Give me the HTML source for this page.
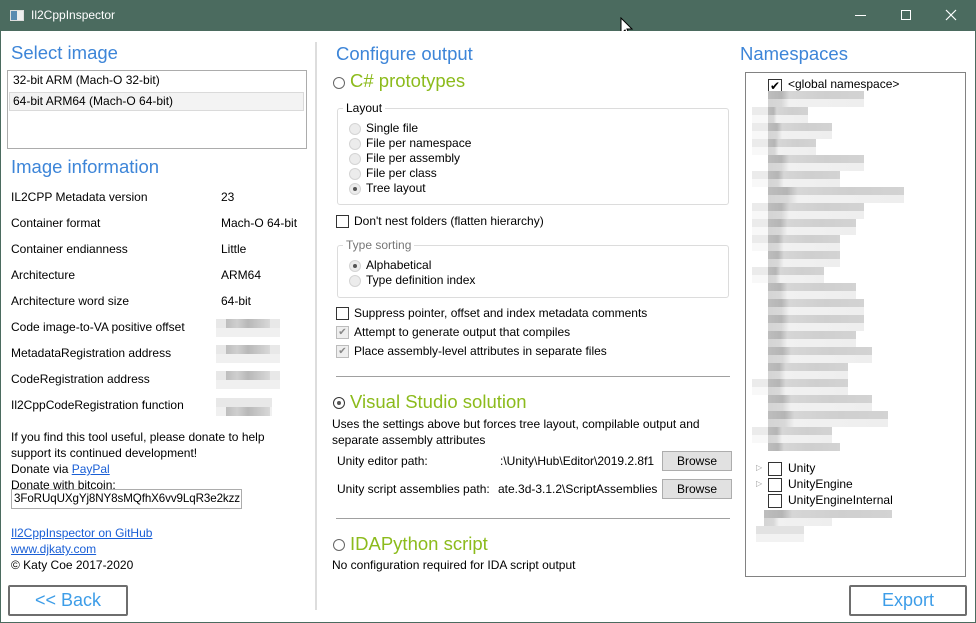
<!DOCTYPE html>
<html><head><meta charset="utf-8"><style>
*{margin:0;padding:0;box-sizing:border-box}
body{width:976px;height:623px;overflow:hidden;background:#4b6b5f;font-family:"Segoe UI","Liberation Sans",sans-serif;font-size:12px;color:#000;position:relative}
.win{position:absolute;left:1px;top:31px;width:974px;height:591px;background:#fff}
.in{position:absolute;left:0;top:1px;width:974px;height:590px}
.a{position:absolute;white-space:nowrap}
.h{font-size:18.5px;color:#3d85d8}
.g{font-size:18.5px;color:#8cbb1c}
.lnk{color:#1a5fd6;text-decoration:underline}
.rad{position:absolute;width:12px;height:12px;border-radius:50%;border:1px solid #d4d4d4;background:#ececec}
.rad.on::after{content:"";position:absolute;left:3px;top:3px;width:4px;height:4px;border-radius:50%;background:#555}
.cb{position:absolute;width:13px;height:13px;border:1px solid #333;background:#fff}
.cb.dis{border-color:#bcbcbc;background:#eee}
.btn{position:absolute;border:2px solid #6e6e6e;border-radius:2px;background:#fff;color:#3d9de8;font-size:18px;text-align:center}
.bb{position:absolute;width:70px;height:20px;border:1px solid #adadad;background:#e1e1e1;text-align:center;line-height:18px}
.grp{position:absolute;border:1px solid #dcdcdc;border-radius:3px}
.blur{position:absolute;height:16px}
.blur i{position:absolute;left:0;right:0;top:0;height:8px;background:linear-gradient(90deg,#bdbdbd 0,#b5b5b5 14%,#d6d6d6 22%,#cfcfcf 60%,#d3d3d3 100%)}
.blur b{position:absolute;left:0;right:0;top:8px;height:8px;background:linear-gradient(90deg,#d4d4d4 0,#d8d8d8 14%,#f1f1f1 22%,#eeeeee 100%)}
.stub{position:absolute;width:16px;height:16px;background:linear-gradient(#ebebeb 50%,#f8f8f8 50%)}
.val{position:absolute;width:64px;height:18px;background:linear-gradient(#e8e8e8 50%,#f0f0f0 50%)}
.val i{position:absolute;left:10px;width:44px;top:0;height:9px;background:linear-gradient(90deg,#bdbdbd,#cfcfcf,#b8b8b8,#c8c8c8,#d8d8d8)}
</style></head><body>
<!-- title bar -->
<div class="a" style="left:10px;top:10px;width:14px;height:11px;border:1px solid #ddd;background:linear-gradient(90deg,#5a8ab0 0,#5a8ab0 50%,#eee 50%)"></div>
<div class="a" style="left:31px;top:8px;color:#fff;font-size:12px">Il2CppInspector</div>
<div class="a" style="left:855px;top:15px;width:11px;height:1px;background:#fff"></div>
<div class="a" style="left:901px;top:10px;width:10px;height:10px;border:1px solid #fff"></div>
<svg class="a" style="left:945px;top:9px" width="12" height="12"><path d="M1 1L11 11M11 1L1 11" stroke="#fff" stroke-width="1.2"/></svg>
<svg class="a" style="left:620px;top:17px" width="14" height="22"><path d="M1 1L1 17L5 13L8 20L10 19L7 12L12 12Z" fill="#fff" stroke="#000" stroke-width="1"/></svg>

<div class="win"><div class="in">
<!-- LEFT -->
<div class="a h" style="left:10px;top:10px">Select image</div>
<div class="a" style="left:6px;top:38px;width:300px;height:79px;border:1px solid #acacac"></div>
<div class="a" style="left:12px;top:41px">32-bit ARM (Mach-O 32-bit)</div>
<div class="a" style="left:8px;top:60px;width:295px;height:19px;background:#f3f3f3;border:1px solid #dadada"></div>
<div class="a" style="left:12px;top:62px">64-bit ARM64 (Mach-O 64-bit)</div>
<div class="a h" style="left:10px;top:124px">Image information</div>
<div class="a" style="left:10px;top:158px">IL2CPP Metadata version</div><div class="a" style="left:220px;top:158px">23</div>
<div class="a" style="left:10px;top:184px">Container format</div><div class="a" style="left:220px;top:184px">Mach-O 64-bit</div>
<div class="a" style="left:10px;top:210px">Container endianness</div><div class="a" style="left:220px;top:210px">Little</div>
<div class="a" style="left:10px;top:236px">Architecture</div><div class="a" style="left:220px;top:236px">ARM64</div>
<div class="a" style="left:10px;top:262px">Architecture word size</div><div class="a" style="left:220px;top:262px">64-bit</div>
<div class="a" style="left:10px;top:288px">Code image-to-VA positive offset</div><div class="val" style="left:215px;top:287px"><i></i></div>
<div class="a" style="left:10px;top:314px">MetadataRegistration address</div><div class="val" style="left:215px;top:313px"><i></i></div>
<div class="a" style="left:10px;top:340px">CodeRegistration address</div><div class="val" style="left:215px;top:339px"><i></i></div>
<div class="a" style="left:10px;top:366px">Il2CppCodeRegistration function</div><div class="val" style="left:215px;top:366px;width:56px"><i style="top:9px"></i></div>
<div class="a" style="left:10px;top:397px;line-height:16px">If you find this tool useful, please donate to help<br>support its continued development!<br>Donate via <span class="lnk">PayPal</span><br>Donate with bitcoin:</div>
<div class="a" style="left:10px;top:457px;width:231px;height:20px;border:1px solid #acacac;padding-left:2px;line-height:18px;font-size:11.6px;overflow:hidden;letter-spacing:-0.1px">3FoRUqUXgYj8NY8sMQfhX6vv9LqR3e2kzz</div>
<div class="a" style="left:10px;top:493px;line-height:16px"><span class="lnk">Il2CppInspector on GitHub</span><br><span class="lnk">www.djkaty.com</span><br>© Katy Coe 2017-2020</div>
<div class="a" style="left:314px;top:10px;width:2px;height:568px;background:#ddd"></div>

<!-- MIDDLE -->
<div class="a h" style="left:335px;top:11px">Configure output</div>
<div class="rad" style="left:332px;top:45px;border-color:#666;background:#fff"></div>
<div class="a g" style="left:349px;top:38px">C# prototypes</div>
<div class="grp" style="left:336px;top:76px;width:392px;height:97px"></div>
<div class="a" style="left:342px;top:69px;background:#fff;padding:0 3px">Layout</div>
<div class="rad" style="left:348px;top:91px"></div><div class="a" style="left:365px;top:89px">Single file</div>
<div class="rad" style="left:348px;top:106px"></div><div class="a" style="left:365px;top:104px">File per namespace</div>
<div class="rad" style="left:348px;top:121px"></div><div class="a" style="left:365px;top:119px">File per assembly</div>
<div class="rad" style="left:348px;top:136px"></div><div class="a" style="left:365px;top:134px">File per class</div>
<div class="rad on" style="left:348px;top:151px"></div><div class="a" style="left:365px;top:149px">Tree layout</div>
<div class="cb" style="left:335px;top:183px"></div><div class="a" style="left:353px;top:182px">Don't nest folders (flatten hierarchy)</div>
<div class="grp" style="left:336px;top:213px;width:392px;height:53px"></div>
<div class="a" style="left:342px;top:206px;background:#fff;padding:0 3px;color:#777">Type sorting</div>
<div class="rad on" style="left:348px;top:228px"></div><div class="a" style="left:365px;top:226px">Alphabetical</div>
<div class="rad" style="left:348px;top:243px"></div><div class="a" style="left:365px;top:241px">Type definition index</div>
<div class="cb" style="left:335px;top:275px"></div><div class="a" style="left:353px;top:274px">Suppress pointer, offset and index metadata comments</div>
<div class="cb dis" style="left:335px;top:294px;font-size:10px;line-height:11px;color:#888;text-align:center">✔</div><div class="a" style="left:353px;top:293px">Attempt to generate output that compiles</div>
<div class="cb dis" style="left:335px;top:313px;font-size:10px;line-height:11px;color:#888;text-align:center">✔</div><div class="a" style="left:353px;top:312px">Place assembly-level attributes in separate files</div>
<div class="a" style="left:335px;top:344px;width:394px;height:1px;background:#a0a0a0"></div>
<div class="rad on" style="left:332px;top:365px;border-color:#333;background:#fff"></div>
<div class="a g" style="left:349px;top:359px">Visual Studio solution</div>
<div class="a" style="left:331px;top:384px;line-height:16px">Uses the settings above but forces tree layout, compilable output and<br>separate assembly attributes</div>
<div class="a" style="left:336px;top:422px">Unity editor path:</div>
<div class="a" style="left:499px;top:422px">:\Unity\Hub\Editor\2019.2.8f1</div>
<div class="bb" style="left:661px;top:419px">Browse</div>
<div class="a" style="left:336px;top:450px">Unity script assemblies path:</div>
<div class="a" style="left:497px;top:450px">ate.3d-3.1.2\ScriptAssemblies</div>
<div class="bb" style="left:661px;top:447px">Browse</div>
<div class="a" style="left:335px;top:486px;width:394px;height:1px;background:#a0a0a0"></div>
<div class="rad" style="left:332px;top:507px;border-color:#666;background:#fff"></div>
<div class="a g" style="left:349px;top:501px">IDAPython script</div>
<div class="a" style="left:331px;top:526px">No configuration required for IDA script output</div>

<!-- RIGHT -->
<div class="a h" style="left:739px;top:11px">Namespaces</div>
<div class="a" style="left:744px;top:40px;width:221px;height:505px;border:1px solid #828282"></div>
<div class="a" style="left:767px;top:47px;width:14px;height:14px;border:1px solid #333;font-size:12px;line-height:12px;text-align:center">✔</div>
<div class="a" style="left:787px;top:45px">&lt;global namespace&gt;</div>
<div class="a" style="left:755px;top:431px;color:#999;font-size:8px">▷</div><div class="a" style="left:767px;top:430px;width:14px;height:14px;border:1px solid #333"></div><div class="a" style="left:787px;top:429px">Unity</div>
<div class="a" style="left:755px;top:447px;color:#999;font-size:8px">▷</div><div class="a" style="left:767px;top:446px;width:14px;height:14px;border:1px solid #333"></div><div class="a" style="left:787px;top:445px">UnityEngine</div>
<div class="a" style="left:767px;top:462px;width:14px;height:14px;border:1px solid #333"></div><div class="a" style="left:787px;top:461px">UnityEngineInternal</div>
<div class="blur" style="left:763px;top:478px;width:128px"><i></i><b style="right:60px"></b></div>
<div class="blur" style="left:755px;top:494px;width:48px"><i style="background:#e2e2e2"></i><b style="background:#f2f2f2"></b></div>

<!-- blurred namespace rows -->
<div class="blur" style="left:767px;top:59px;width:96px"><i></i><b></b></div>
<div class="stub" style="left:751px;top:75px"></div><div class="blur" style="left:767px;top:75px;width:40px"><i></i><b></b></div>
<div class="stub" style="left:751px;top:91px"></div><div class="blur" style="left:767px;top:91px;width:64px"><i></i><b></b></div>
<div class="stub" style="left:751px;top:107px"></div><div class="blur" style="left:767px;top:107px;width:48px"><i></i><b></b></div>
<div class="blur" style="left:767px;top:123px;width:96px"><i></i><b></b></div>
<div class="stub" style="left:751px;top:139px"></div><div class="blur" style="left:767px;top:139px;width:72px"><i></i><b></b></div>
<div class="blur" style="left:767px;top:155px;width:136px"><i></i><b></b></div>
<div class="stub" style="left:751px;top:171px"></div><div class="blur" style="left:767px;top:171px;width:96px"><i></i><b></b></div>
<div class="stub" style="left:751px;top:187px"></div><div class="blur" style="left:767px;top:187px;width:88px"><i></i><b></b></div>
<div class="stub" style="left:751px;top:203px"></div><div class="blur" style="left:767px;top:203px;width:72px"><i></i><b></b></div>
<div class="blur" style="left:767px;top:219px;width:72px"><i></i><b></b></div>
<div class="stub" style="left:751px;top:235px"></div><div class="blur" style="left:767px;top:235px;width:56px"><i></i><b></b></div>
<div class="blur" style="left:767px;top:251px;width:88px"><i></i><b></b></div>
<div class="blur" style="left:767px;top:267px;width:96px"><i></i><b></b></div>
<div class="blur" style="left:767px;top:283px;width:96px"><i></i><b></b></div>
<div class="blur" style="left:767px;top:299px;width:88px"><i></i><b></b></div>
<div class="blur" style="left:767px;top:315px;width:104px"><i></i><b></b></div>
<div class="blur" style="left:767px;top:331px;width:80px"><i></i><b></b></div>
<div class="stub" style="left:751px;top:347px"></div><div class="blur" style="left:767px;top:347px;width:80px"><i></i><b></b></div>
<div class="blur" style="left:767px;top:363px;width:104px"><i></i><b></b></div>
<div class="blur" style="left:767px;top:379px;width:120px"><i></i><b></b></div>
<div class="stub" style="left:751px;top:395px"></div><div class="blur" style="left:767px;top:395px;width:64px"><i></i><b></b></div>
<div class="blur" style="left:767px;top:411px;width:72px"><i></i><b style="height:0"></b></div>
</div>
<div class="btn" style="left:7px;top:554px;width:120px;height:31px;line-height:26px">&lt;&lt; Back</div>
<div class="btn" style="left:848px;top:554px;width:118px;height:31px;line-height:26px">Export</div>
</div>
</body></html>
